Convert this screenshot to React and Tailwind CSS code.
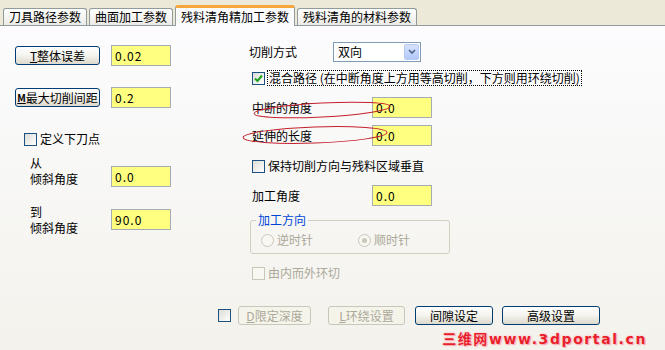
import React from "react";

const XpButton = ({ children, className = "", disabled = false }) => (
  <div
    className={`flex items-center justify-center h-[19px] rounded-[3px] border leading-[14px] ${
      disabled
        ? "border-[#c9c7ba] bg-[#f5f4ea] text-[#aca899]"
        : "border-[#003c74] bg-gradient-to-b from-white via-[#f4f3ee] to-[#dcd9cc] text-black"
    } ${className}`}
  >
    {children}
  </div>
);

const YellowBox = ({ value, className = "" }) => (
  <div
    className={`w-[60px] h-[21px] bg-[#ffff80] border border-[#a5acb2] pl-[3px] flex items-center tracking-[1px] ${className}`}
  >
    {value}
  </div>
);

const CheckBox = ({ checked = false, disabled = false }) => (
  <div
    className={`w-[13px] h-[13px] shrink-0 border flex items-center justify-center ${
      disabled ? "border-[#cac8bb] bg-[#f8f7f2]" : "border-[#1c5180] bg-gradient-to-br from-[#dcdcd7] to-white"
    }`}
  >
    {checked && (
      <svg width="9" height="9" viewBox="0 0 9 9">
        <path d="M1 4.5 L3.5 7 L8 1.5" fill="none" stroke="#21a121" strokeWidth="2" />
      </svg>
    )}
  </div>
);

const Radio = ({ checked = false }) => (
  <div className="w-[13px] h-[13px] rounded-full border border-[#cac8bb] bg-[#f8f7f2] flex items-center justify-center shrink-0">
    {checked && <div className="w-[5px] h-[5px] rounded-full bg-[#cac8bb]" />}
  </div>
);

const tabs = ["刀具路径参数", "曲面加工参数", "残料清角精加工参数", "残料清角的材料参数"];

export default function App() {
  return (
    <div className="relative w-[665px] h-[350px] overflow-hidden bg-[#ece9d8] text-[12px] leading-[14px] text-black font-['Noto_Sans_CJK_SC','Liberation_Sans',sans-serif]">
      {/* tab strip */}
      <div className="relative z-10 flex items-end h-[25px] pl-[3px] gap-[2px]">
        {tabs.map((t, i) =>
          i === 2 ? (
            <div
              key={t}
              className="-mb-px h-[21px] px-[5px] flex items-center bg-[#fcfcfe] border-x border-[#919b9c] border-t-[3px] border-t-[#f5a73b] rounded-t-[3px]"
            >
              {t}
            </div>
          ) : (
            <div
              key={t}
              className="h-[17px] px-[5px] flex items-center bg-gradient-to-b from-white to-[#ecebe6] border-x border-t border-[#919b9c] rounded-t-[3px]"
            >
              {t}
            </div>
          )
        )}
      </div>

      {/* panel */}
      <div className="h-[325px] border-t border-[#919b9c] bg-gradient-to-b from-[#fcfcfe] to-[#f3f2ec] flex flex-col">
        <div className="flex">
          {/* left column */}
          <div className="w-[249px] pl-[15px] pt-[19px] flex flex-col">
            <div className="flex items-center gap-[11px]">
              <XpButton className="w-[85px]">
                <span className="underline">T</span>整体误差
              </XpButton>
              <YellowBox value="0.02" />
            </div>
            <div className="flex items-center gap-[11px] mt-[21px]">
              <XpButton className="w-[85px]">
                <span className="underline font-bold text-[10px]">M</span>最大切削间距
              </XpButton>
              <YellowBox value="0.2" />
            </div>
            <div className="flex items-center gap-[3px] mt-[24px] ml-[9px]">
              <CheckBox />
              <span>定义下刀点</span>
            </div>
            <div className="flex items-end mt-[9px] ml-[15px]">
              <div className="w-[81px] leading-[16px]">
                <div>从</div>
                <div>倾斜角度</div>
              </div>
              <YellowBox value="0.0" />
            </div>
            <div className="flex items-start mt-[17px] ml-[15px]">
              <div className="w-[81px] leading-[16px]">
                <div>到</div>
                <div>倾斜角度</div>
              </div>
              <YellowBox value="90.0" className="mt-[5px]" />
            </div>
          </div>

          {/* right column */}
          <div className="pt-[16px] flex flex-col">
            <div className="flex items-center">
              <div className="w-[84px]">切削方式</div>
              <div className="w-[88px] h-[20px] border border-[#7f9db9] bg-white flex items-center justify-between pl-[4px] pr-px">
                <span>双向</span>
                <div className="w-[15px] h-[16px] rounded-[2px] bg-gradient-to-b from-[#d6e3fd] to-[#b2c8f8] border border-[#b6c9f2] flex items-center justify-center">
                  <svg width="8" height="6" viewBox="0 0 8 6">
                    <path d="M1 1 L4 4 L7 1" fill="none" stroke="#4d6185" strokeWidth="1.6" />
                  </svg>
                </div>
              </div>
            </div>
            <div className="flex items-center gap-[2px] mt-[8px] ml-[3px]">
              <CheckBox checked />
              <span className="border border-dotted border-black px-px whitespace-nowrap">
                混合路径 (在中断角度上方用等高切削，下方则用环绕切削)
              </span>
            </div>
            <div className="flex items-center mt-[11px] ml-[3px]">
              <div className="w-[120px]">中断的角度</div>
              <YellowBox value="0.0" className="h-[20px]" />
            </div>
            <div className="flex items-center mt-[7px] ml-[3px]">
              <div className="w-[120px]">延伸的长度</div>
              <YellowBox value="0.0" className="h-[20px]" />
            </div>
            <div className="flex items-center gap-[3px] mt-[13px] ml-[3px]">
              <CheckBox />
              <span>保持切削方向与残料区域垂直</span>
            </div>
            <div className="flex items-center mt-[12px] ml-[3px]">
              <div className="w-[120px]">加工角度</div>
              <YellowBox value="0.0" className="h-[20px]" />
            </div>
            <fieldset className="mt-[7px] ml-px w-[200px] border border-[#d0d0bf] rounded-[3px] pb-[6px]">
              <legend className="ml-[5px] px-[2px] text-[#0046d5]">加工方向</legend>
              <div className="flex items-center mt-[6px] pl-[10px] text-[#aca899]">
                <Radio />
                <span className="ml-[3px] w-[81px]">逆时针</span>
                <Radio checked />
                <span className="ml-[3px]">顺时针</span>
              </div>
            </fieldset>
            <div className="flex items-center gap-[3px] mt-[12px] ml-[3px] text-[#aca899]">
              <CheckBox disabled />
              <span>由内而外环切</span>
            </div>
          </div>
        </div>

        {/* bottom buttons */}
        <div className="flex items-center mt-[26px] pl-[218px]">
          <CheckBox />
          <XpButton disabled className="w-[73px] ml-[7px] h-[18px]">
            <span className="underline">D</span>限定深度
          </XpButton>
          <XpButton disabled className="w-[77px] ml-[17px] h-[18px]">
            <span className="underline">L</span>环绕设置
          </XpButton>
          <XpButton className="w-[78px] ml-[10px] h-[18px]">间隙设定</XpButton>
          <XpButton className="w-[98px] ml-[9px] h-[18px]">高级设置</XpButton>
        </div>
        <div className="flex justify-end pr-[18px] mt-[6px]">
          <span className="text-[14px] leading-[16px] font-bold text-[#e8202a] tracking-[1.6px] font-['DejaVu_Sans','Noto_Sans_CJK_SC',sans-serif] [text-shadow:0_0_1px_#fff,0_0_2px_#f7a0a8,1px_1px_1px_#f7a0a8]">
            三维网www.3dportal.cn
          </span>
        </div>
      </div>

      {/* hand-drawn annotation ellipses */}
      <svg className="absolute inset-0 pointer-events-none" width="665" height="350">
        <ellipse cx="322" cy="110" rx="68" ry="7" transform="rotate(-3 322 110)" fill="none" stroke="#c4202c" strokeWidth="1" />
        <ellipse cx="315" cy="135" rx="72" ry="8" transform="rotate(-2 315 135)" fill="none" stroke="#c4202c" strokeWidth="1" />
      </svg>
    </div>
  );
}
